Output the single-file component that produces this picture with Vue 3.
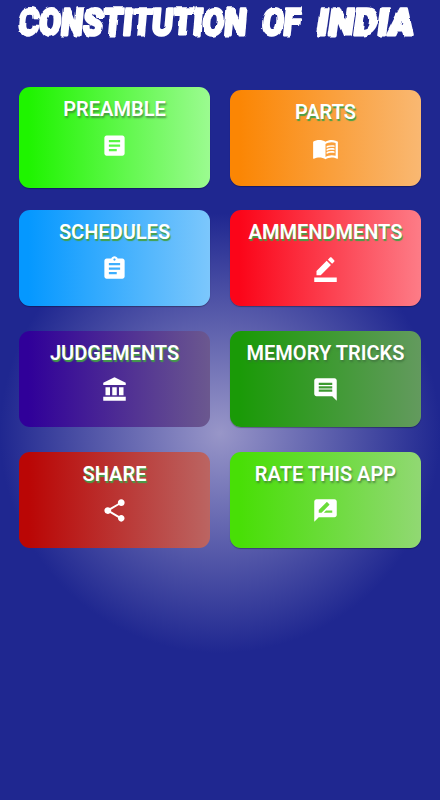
<template>
  <div class="home">
    <svg class="title" viewBox="0 0 440 44">
      <!-- 毛笔边缘 -->
      <filter id="brush" x="-5%" y="-20%" width="110%" height="140%">
        <feTurbulence type="fractalNoise" baseFrequency="0.13 0.09" numOctaves="1" seed="4" result="noise" />
        <feDisplacementMap in="SourceGraphic" in2="noise" scale="4" xChannelSelector="R" yChannelSelector="G" />
      </filter>
      <g filter="url(#brush)">
        <text transform="translate(17.5 34.5) skewX(-5) scale(0.855 1)">CONSTITUTION</text>
        <text transform="translate(261 34.5) skewX(-6) scale(0.845 1)">OF</text>
        <text transform="translate(316 34.5) skewX(-8) scale(0.985 1)">INDIA</text>
      </g>
    </svg>

    <!-- 菜单 -->
    <div class="menu">
      <div v-for="item in items" :key="item.key" :class="['card', item.key]">
        <div class="label">{{ item.label }}</div>
        <svg class="icon" viewBox="0 0 24 24">
          <path :d="item.icon" />
        </svg>
      </div>
    </div>
  </div>
</template>

<script setup>
const items = [
  {
    key: 'preamble',
    label: 'PREAMBLE',
    icon: 'M19 3H5c-1.1 0-2 .9-2 2v14c0 1.1.9 2 2 2h14c1.1 0 2-.9 2-2V5c0-1.1-.9-2-2-2zm-5 14H7v-2h7v2zm3-4H7v-2h10v2zm0-4H7V7h10v2z'
  },
  {
    key: 'parts',
    label: 'PARTS',
    icon: 'M21 5c-1.11-.35-2.33-.5-3.5-.5-1.95 0-4.05.4-5.5 1.5-1.45-1.1-3.55-1.5-5.5-1.5S2.45 4.9 1 6v14.65c0 .25.25.5.5.5.1 0 .15-.05.25-.05C3.1 20.45 5.05 20 6.5 20c1.95 0 4.05.4 5.5 1.5 1.35-.85 3.8-1.5 5.5-1.5 1.65 0 3.35.3 4.75 1.05.1.05.15.05.25.05.25 0 .5-.25.5-.5V6c-.6-.45-1.25-.75-2-1zm0 13.5c-1.1-.35-2.3-.5-3.5-.5-1.7 0-4.15.65-5.5 1.5V8c1.35-.85 3.8-1.5 5.5-1.5 1.2 0 2.4.15 3.5.5v11.5zM17.5 10.5c.88 0 1.73.09 2.5.26V9.24c-.79-.15-1.64-.24-2.5-.24-1.7 0-3.24.29-4.5.83v1.66c1.13-.64 2.7-.99 4.5-.99zM13 12.49v1.66c1.13-.64 2.7-.99 4.5-.99.88 0 1.73.09 2.5.26V11.9c-.79-.15-1.64-.24-2.5-.24-1.7 0-3.24.3-4.5.83zM17.5 14.33c-1.7 0-3.24.29-4.5.83v1.66c1.13-.64 2.7-.99 4.5-.99.88 0 1.73.09 2.5.26v-1.52c-.79-.16-1.64-.24-2.5-.24z'
  },
  {
    key: 'schedules',
    label: 'SCHEDULES',
    icon: 'M19 3h-4.18C14.4 1.84 13.3 1 12 1c-1.3 0-2.4.84-2.82 2H5c-1.1 0-2 .9-2 2v14c0 1.1.9 2 2 2h14c1.1 0 2-.9 2-2V5c0-1.1-.9-2-2-2zm-7 0c.55 0 1 .45 1 1s-.45 1-1 1-1-.45-1-1 .45-1 1-1zm2 14H7v-2h7v2zm3-4H7v-2h10v2zm0-4H7V7h10v2z'
  },
  {
    key: 'ammendments',
    label: 'AMMENDMENTS',
    icon: 'M22 24H2v-4h20v4zM13.06 5.19l3.75 3.75L7.75 18H4v-3.75l9.06-9.06zm4.82 2.68l-3.75-3.75 1.83-1.83c.39-.39 1.02-.39 1.41 0l2.34 2.34c.39.39.39 1.02 0 1.41l-1.83 1.83z'
  },
  {
    key: 'judgements',
    label: 'JUDGEMENTS',
    icon: 'M4 10h4v7H4zM10 10h4v7h-4zM2 18.5h20V22H2zM16 10h4v7h-4zM12 1L2 6v2h20V6z'
  },
  {
    key: 'memory',
    label: 'MEMORY TRICKS',
    icon: 'M21.99 4c0-1.1-.89-2-1.99-2H4c-1.1 0-2 .9-2 2v12c0 1.1.9 2 2 2h14l4 4-.01-18zM18 14H6v-2h12v2zm0-3H6V9h12v2zm0-3H6V6h12v2z'
  },
  {
    key: 'share',
    label: 'SHARE',
    icon: 'M18 16.08c-.76 0-1.44.3-1.96.77L8.91 12.7c.05-.23.09-.46.09-.7s-.04-.47-.09-.7l7.05-4.11c.54.5 1.25.81 2.04.81 1.66 0 3-1.34 3-3s-1.34-3-3-3-3 1.34-3 3c0 .24.04.47.09.7L8.04 9.81C7.5 9.31 6.79 9 6 9c-1.66 0-3 1.34-3 3s1.34 3 3 3c.79 0 1.5-.31 2.04-.81l7.12 4.16c-.05.21-.08.43-.08.65 0 1.61 1.31 2.92 2.92 2.92s2.92-1.31 2.92-2.92-1.31-2.92-2.92-2.92z'
  },
  {
    key: 'rate',
    label: 'RATE THIS APP',
    icon: 'M20 2H4c-1.1 0-1.99.9-1.99 2L2 22l4-4h14c1.1 0 2-.9 2-2V4c0-1.1-.9-2-2-2zM6 14v-2.47l6.88-6.88c.2-.2.51-.2.71 0l1.77 1.77c.2.2.2.51 0 .71L8.47 14H6zm12 0h-7.5l2-2H18v2z'
  }
]
</script>

<style>
body {
  margin: 0;
  background: #1f2790;
}
</style>

<style scoped>
.home {
  box-sizing: border-box;
  height: 800px;
  overflow: hidden;
  background: radial-gradient(circle 220px at 220px 433px, #9896c8, #1f2790);
  font-family: Roboto, "Liberation Sans", sans-serif;
}

.title {
  display: block;
  width: 440px;
  height: 44px;
  margin-bottom: 43px;
}

.title text {
  fill: #fff;
  stroke: #fff;
  stroke-width: 2.8px;
  stroke-linejoin: round;
  font-size: 37px;
  font-weight: 900;
}

.menu {
  display: grid;
  grid-template-columns: 191px 191px;
  grid-template-rows: 101px 99px 99px 99px;
  column-gap: 20px;
  row-gap: 22px;
  align-items: start;
  padding-left: 19px;
}

.card {
  box-sizing: border-box;
  height: 96px;
  padding-top: 10px;
  border-radius: 11px;
  display: flex;
  flex-direction: column;
  align-items: center;
  gap: 11px;
  box-shadow: 0 1px 1px rgba(0, 0, 0, 0.3);
}

.label {
  color: #fff;
  font-size: 20px;
  font-weight: 600;
  line-height: 24px;
  white-space: nowrap;
  text-shadow: 1px 2px 1px #43a047;
}

.icon {
  width: 27px;
  height: 27px;
  fill: #fff;
}

.preamble {
  height: 101px;
  background: linear-gradient(to right, #1ff400 5%, #9bfb90);
}

.parts {
  margin-top: 3px;
  background: linear-gradient(to right, #fb8604 5%, #f9b872);
}

.schedules {
  background: linear-gradient(to right, #0598ff 5%, #7cc7fc);
}

.ammendments {
  background: linear-gradient(to right, #fb0519 5%, #fd7c87);
}

.judgements {
  background: linear-gradient(to right, #300099 5%, #6b588f);
  box-shadow: none;
}

.memory {
  background: linear-gradient(to right, #1a9a07 5%, #639a5e);
}

.share {
  background: linear-gradient(to right, #ba0605 5%, #bb6562);
  box-shadow: none;
}

.rate {
  background: linear-gradient(to right, #48df06 5%, #91d873);
}

.preamble .label,
.memory .label,
.rate .label {
  text-shadow: 1px 2px 2px rgba(60, 110, 60, 0.7);
}
</style>
